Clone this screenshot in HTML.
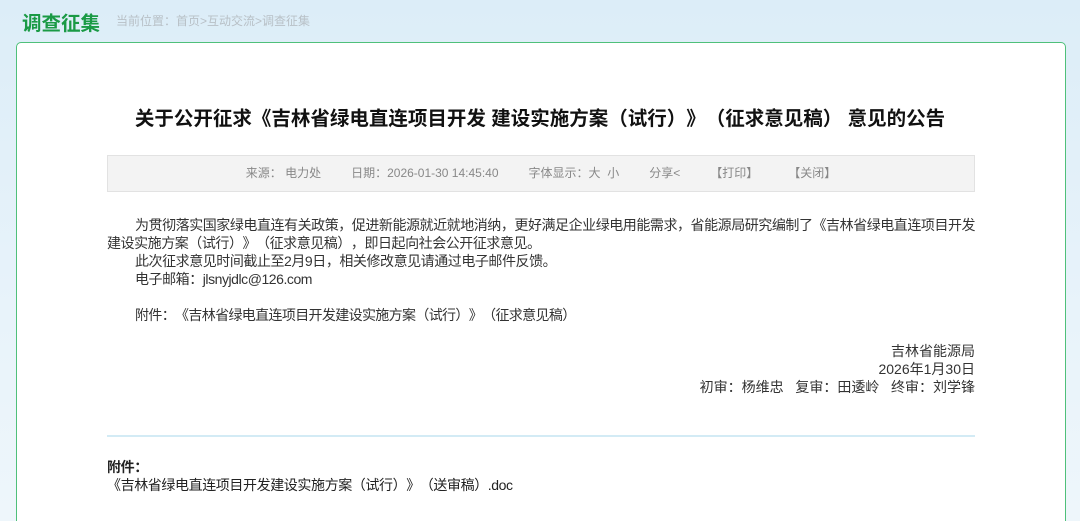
<!DOCTYPE html>
<html><head><meta charset="utf-8">
<style>
*{margin:0;padding:0;box-sizing:border-box}
html,body{width:1080px;height:521px;overflow:hidden}
body{background:linear-gradient(180deg,#dcedf8 0%,#e8f3fa 60%,#eef6fb 100%);font-family:"Liberation Sans","Noto Sans CJK SC",sans-serif;position:relative;text-spacing-trim:space-all}
.h{position:absolute;left:22px;top:7px;font-size:19.5px;font-weight:bold;color:#1a9a45}
.bc{position:absolute;left:116px;top:12px;font-size:12px;color:#b8c0c6}
.panel{position:absolute;left:16px;top:42px;width:1050px;height:500px;background:#fff;border:1px solid #4fc07a;border-radius:5px}
.t{position:absolute;left:0;width:1080px;top:102px;text-align:center;font-size:19.5px;font-weight:bold;color:#111}
.meta{position:absolute;left:107px;top:155px;width:868px;height:37px;background:#f3f3f3;border:1px solid #e2e2e2;font-size:12px;color:#888;line-height:35px;text-align:center;padding-left:0}
.meta span{margin:0 15px}
.body{position:absolute;left:107px;top:216px;width:900px;font-size:14px;line-height:18px;color:#333;letter-spacing:-0.45px}
.body p{text-indent:2em}
.r{text-align:right;text-indent:0 !important;width:868px;letter-spacing:0}
.line{position:absolute;left:107px;top:435px;width:868px;height:2px;background:#d3ebf5}
.att{position:absolute;left:107px;top:458px;font-size:14px;line-height:18px;color:#222;letter-spacing:-0.4px}
</style></head><body>
<div class="h">调查征集</div>
<div class="bc">当前位置：首页&gt;互动交流&gt;调查征集</div>
<div class="panel"></div>
<div class="t">关于公开征求《吉林省绿电直连项目开发 建设实施方案（试行）》（征求意见稿） 意见的公告</div>
<div class="meta"><span>来源：&nbsp;电力处</span><span>日期：2026-01-30 14:45:40</span><span>字体显示：大&nbsp;&nbsp;小</span><span>分享&lt;</span><span>【打印】</span><span>【关闭】</span></div>
<div class="body">
<p style="white-space:nowrap">为贯彻落实国家绿电直连有关政策，促进新能源就近就地消纳，更好满足企业绿电用能需求，省能源局研究编制了《吉林省绿电直连项目开发<br>建设实施方案（试行）》（征求意见稿），即日起向社会公开征求意见。</p>
<p>此次征求意见时间截止至2月9日，相关修改意见请通过电子邮件反馈。</p>
<p>电子邮箱：jlsnyjdlc@126.com</p>
<p>&nbsp;</p>
<p style="letter-spacing:-0.65px">附件：《吉林省绿电直连项目开发建设实施方案（试行）》（征求意见稿）</p>
<p>&nbsp;</p>
<p class="r">吉林省能源局</p>
<p class="r">2026年1月30日</p>
<p class="r">初审：杨维忠&nbsp;&nbsp;&nbsp;复审：田逶岭&nbsp;&nbsp;&nbsp;终审：刘学锋</p>
</div>
<div class="line"></div>
<div class="att"><b>附件：</b><br>《吉林省绿电直连项目开发建设实施方案（试行）》（送审稿）.doc</div>
</body></html>
